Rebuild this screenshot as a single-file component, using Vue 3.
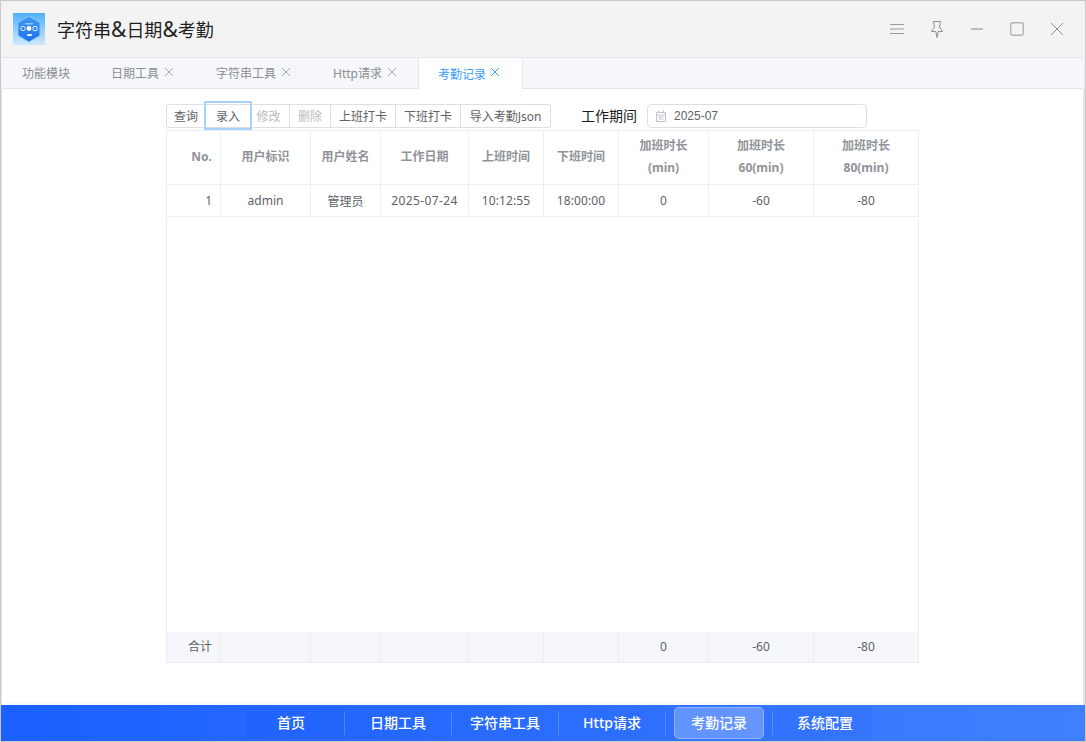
<template>
  <div class="window">
    <!-- Title bar -->
    <header class="titlebar">
      <svg class="logo" width="32" height="32" viewBox="0 0 32 32">
        <defs>
          <linearGradient id="logoBg" x1="0" y1="0" x2="0" y2="1">
            <stop offset="0" stop-color="#4fb0fb" />
            <stop offset="1" stop-color="#cfe9fe" />
          </linearGradient>
          <linearGradient id="logoHex" x1="0" y1="0" x2="0" y2="1">
            <stop offset="0" stop-color="#3f9bf6" />
            <stop offset="1" stop-color="#1f6fe8" />
          </linearGradient>
        </defs>
        <rect width="32" height="32" fill="url(#logoBg)" />
        <path d="M16 3 L27 9.5 V22.5 L16 29 L5 22.5 V9.5 Z" fill="url(#logoHex)" stroke="#8cc8fb" stroke-width="1" />
        <rect x="12" y="10" width="8" height="1.5" fill="#8cc8fb" />
        <circle cx="10" cy="15.5" r="2.2" fill="none" stroke="#d5ecff" stroke-width="1" />
        <circle cx="16" cy="15.5" r="2.4" fill="#fff" />
        <rect x="20" y="13.5" width="4" height="4.2" rx="1" fill="none" stroke="#e8f5ff" stroke-width="1" />
        <rect x="14" y="21" width="5" height="2" rx="1" fill="#e8f5ff" />
      </svg>
      <span class="app-title">字符串<span class="amp">&amp;</span>日期<span class="amp">&amp;</span>考勤</span>
      <div class="win-controls">
        <span class="win-btn">
          <svg width="14" height="10" viewBox="0 0 14 10" fill="none" stroke="#9a9a9a" stroke-width="1">
            <path d="M0 .5H14M0 5H14M0 9.5H14" />
          </svg>
        </span>
        <span class="win-btn">
          <svg width="12" height="17" viewBox="0 0 12 17" fill="none" stroke="#8f8f8f" stroke-width="1">
            <path d="M2.5 .5H9.5L8.5 6L11.5 10.5H7.2L6 16.5L4.8 10.5H.5L3.5 6Z" />
          </svg>
        </span>
        <span class="win-btn">
          <svg width="12" height="2" viewBox="0 0 12 2" fill="none" stroke="#bfbfbf" stroke-width="2">
            <path d="M0 1H12" />
          </svg>
        </span>
        <span class="win-btn">
          <svg width="14" height="14" viewBox="0 0 14 14" fill="none" stroke="#b5b5b5" stroke-width="1.4">
            <rect x=".7" y=".7" width="12.6" height="12.6" rx="2" />
          </svg>
        </span>
        <span class="win-btn">
          <svg width="12" height="12" viewBox="0 0 12 12" fill="none" stroke="#8f8f8f" stroke-width="1">
            <path d="M0 0L12 12M12 0L0 12" />
          </svg>
        </span>
      </div>
    </header>

    <!-- Tabs -->
    <nav class="tabs">
      <div v-for="tab in tabs" :key="tab.name" class="tab" :class="{ active: tab.active }">
        <span>{{ tab.name }}</span>
        <svg v-if="tab.closable" class="tab-close" width="8" height="8" viewBox="0 0 8 8" fill="none" stroke="currentColor" stroke-width="1">
          <path d="M0 0L8 8M8 0L0 8" />
        </svg>
      </div>
    </nav>

    <!-- Main content -->
    <main class="content">
      <div class="toolbar">
        <div class="btn-group">
          <button
            v-for="b in buttons"
            :key="b.label"
            class="btn"
            :class="{ disabled: b.disabled, focused: b.focused, tight: b.tight }"
            :style="{ width: b.width + 'px' }"
          >{{ b.label }}</button>
        </div>
        <label class="period-label">工作期间</label>
        <div class="date-input">
          <svg width="12" height="12" viewBox="0 0 12 12" fill="none" stroke="#c0c4cc" stroke-width="1">
            <path d="M1.5 2.5H10.5V11.5H1.5ZM1.5 5H10.5M3.5 .5V2.5M8.5 .5V2.5M3.5 7H8.5M3.5 9H8.5" />
          </svg>
          <span>2025-07</span>
        </div>
      </div>

      <table class="grid">
        <colgroup>
          <col v-for="(w, i) in colWidths" :key="i" :style="{ width: w + 'px' }" />
        </colgroup>
        <thead>
          <tr>
            <th class="num">No.</th>
            <th>用户标识</th>
            <th>用户姓名</th>
            <th>工作日期</th>
            <th>上班时间</th>
            <th>下班时间</th>
            <th>加班时长<br />(min)</th>
            <th>加班时长<br />60(min)</th>
            <th>加班时长<br />80(min)</th>
          </tr>
        </thead>
        <tbody>
          <tr v-for="row in rows" :key="row.no" class="data-row">
            <td class="num">{{ row.no }}</td>
            <td>{{ row.userId }}</td>
            <td>{{ row.userName }}</td>
            <td class="wide-date">{{ row.date }}</td>
            <td class="wide-time">{{ row.start }}</td>
            <td class="wide-time">{{ row.end }}</td>
            <td>{{ row.ot }}</td>
            <td>{{ row.ot60 }}</td>
            <td>{{ row.ot80 }}</td>
          </tr>
          <tr class="filler"><td colspan="9"></td></tr>
        </tbody>
        <tfoot>
          <tr>
            <td class="num">合计</td>
            <td></td>
            <td></td>
            <td></td>
            <td></td>
            <td></td>
            <td>0</td>
            <td>-60</td>
            <td>-80</td>
          </tr>
        </tfoot>
      </table>
    </main>

    <!-- Bottom dock -->
    <footer class="dock">
      <div class="dock-inner">
        <template v-for="(item, i) in dock" :key="item.name">
          <span v-if="i > 0" class="dock-sep"></span>
          <div class="dock-item" :class="{ active: item.active }" :style="{ width: item.width + 'px' }">{{ item.name }}</div>
        </template>
      </div>
    </footer>
  </div>
</template>

<script setup>
const tabs = [
  { name: '功能模块', closable: false },
  { name: '日期工具', closable: true },
  { name: '字符串工具', closable: true },
  { name: 'Http请求', closable: true },
  { name: '考勤记录', closable: true, active: true }
]

const buttons = [
  { label: '查询', width: 38 },
  { label: '录入', width: 45, focused: true },
  { label: '修改', width: 39, disabled: true, tight: true },
  { label: '删除', width: 41, disabled: true },
  { label: '上班打卡', width: 65 },
  { label: '下班打卡', width: 65 },
  { label: '导入考勤Json', width: 90 }
]

const colWidths = [54, 90, 70, 88, 75, 75, 90, 105, 105]

const rows = [
  {
    no: 1,
    userId: 'admin',
    userName: '管理员',
    date: '2025-07-24',
    start: '10:12:55',
    end: '18:00:00',
    ot: 0,
    ot60: -60,
    ot80: -80
  }
]

const dock = [
  { name: '首页', width: 98 },
  { name: '日期工具', width: 106 },
  { name: '字符串工具', width: 106 },
  { name: 'Http请求', width: 106 },
  { name: '考勤记录', width: 90, active: true },
  { name: '系统配置', width: 99 }
]
</script>

<style>
html, body {
  margin: 0;
  background: #fff;
}
</style>

<style scoped>
.window {
  width: 1086px;
  height: 742px;
  box-sizing: border-box;
  display: flex;
  flex-direction: column;
  border: 1px solid #c9c9c9;
  background: #f3f3f3;
  font-family: "Noto Sans", "Noto Sans CJK SC", sans-serif;
  font-size: 12px;
  color: #606266;
  overflow: hidden;
}

.titlebar {
  height: 56px;
  flex: none;
  display: flex;
  align-items: center;
  padding-left: 12px;
}

.logo {
  flex: none;
}

.app-title {
  margin-left: 12px;
  font-size: 18px;
  color: #1f1f1f;
}

.amp {
  font-size: 21px;
  line-height: 1;
}

.win-controls {
  margin-left: auto;
  margin-right: 8px;
  display: flex;
  align-items: center;
}

.win-btn {
  width: 40px;
  height: 40px;
  display: flex;
  align-items: center;
  justify-content: center;
}

.tabs {
  height: 32px;
  flex: none;
  box-sizing: border-box;
  margin-left: 1px;
  margin-right: 2px;
  display: flex;
  background: #f5f7fa;
  border: 1px solid #e4e7ed;
  border-left: none;
  border-right: none;
}

.tab {
  display: flex;
  align-items: center;
  gap: 6px;
  padding: 0 22px 0 21px;
  height: 30px;
  white-space: nowrap;
  color: #8b8e94;
}

.tab:first-child {
  padding: 0 20px;
}

.tab-close {
  margin-top: -3px;
  color: #a6a9ae;
}

.tab.active {
  background: #fff;
  color: #409eff;
  height: 31px;
  width: 105px;
  box-sizing: border-box;
  border-left: 1px solid #e4e7ed;
  border-right: 1px solid #e4e7ed;
  padding: 0 0 0 19px;
  gap: 5px;
}

.tab.active .tab-close {
  color: #409eff;
}

.content {
  flex: 1;
  background: #fff;
  border-left: 1px solid #e6e6e6;
  border-right: 2px solid #e6e6e6;
  padding: 15px 0 0 164px;
  min-height: 0;
}

.toolbar {
  display: flex;
  align-items: center;
  height: 24px;
  margin-bottom: 2px;
}

.btn-group {
  display: flex;
  height: 24px;
  box-sizing: border-box;
  border: 1px solid #dcdfe6;
  border-radius: 3px;
}

.btn {
  padding: 0 0 1px;
  margin: 0;
  height: 22px;
  background: #fff;
  border: none;
  border-left: 1px solid #dcdfe6;
  font: inherit;
  color: #606266;
  white-space: nowrap;
  text-align: center;
  position: relative;
}

.btn:first-child {
  border-left: none;
  border-radius: 3px 0 0 3px;
}

.btn:last-child {
  border-radius: 0 3px 3px 0;
}

.btn.disabled {
  color: #b8bbc1;
}

.btn.tight {
  padding-right: 3px;
}

.btn.focused {
  z-index: 1;
}

/* focus ring sits over the neighbouring buttons */
.btn.focused::after {
  content: "";
  position: absolute;
  left: -2px;
  right: -2px;
  top: -4px;
  bottom: -3px;
  border: 2px solid #a6d2fb;
  pointer-events: none;
}

.period-label {
  margin-left: 30px;
  padding-bottom: 2px;
  font-size: 14px;
  color: #1a1a1a;
  width: 56px;
  white-space: nowrap;
}

.date-input {
  margin-left: 10px;
  width: 220px;
  height: 24px;
  box-sizing: border-box;
  border: 1px solid #dcdfe6;
  border-radius: 4px;
  display: flex;
  align-items: center;
  gap: 7px;
  padding-left: 7px;
  color: #606266;
  font-family: "Liberation Sans", "Noto Sans CJK SC", sans-serif;
}

.grid {
  width: 752px;
  height: 533px;
  table-layout: fixed;
  border-collapse: collapse;
  border: 1px solid #ebeef5;
}

.grid th,
.grid td {
  border: 1px solid #ebeef5;
  padding: 0;
  text-align: center;
  font-weight: normal;
}

.grid th {
  height: 52px;
  font-weight: 700;
  line-height: 22px;
  padding-bottom: 1px;
  color: #909399;
}

.grid .num {
  text-align: right;
  padding-right: 8px;
}

.data-row td {
  height: 31px;
}

.grid .wide-date {
  letter-spacing: .4px;
}

.grid .wide-time {
  letter-spacing: .1px;
}

.grid .filler td {
  height: auto;
  border-bottom: none;
}

.grid tfoot td {
  height: 31px;
  padding-bottom: 1px;
  box-sizing: border-box;
  border-top: none;
  background: #f5f7fa;
}

.dock {
  height: 36px;
  flex: none;
  margin-top: auto;
  display: flex;
  justify-content: flex-start;
  padding-left: 245px;
  background: linear-gradient(90deg, #1a60ff, #4080ff);
  box-shadow: 0 -1px 4px rgba(0, 0, 0, .06);
}

.dock-inner {
  height: 32px;
  margin-top: 2px;
  display: flex;
  align-items: center;
  background: rgba(0, 40, 200, .05);
}

.dock-item {
  height: 32px;
  line-height: 32px;
  text-align: center;
  box-sizing: border-box;
  color: #fff;
  font-size: 14px;
  font-weight: 500;
}

.dock-item:first-child {
  padding-right: 8px;
}

.dock-item:last-child {
  padding-left: 5px;
}

.dock-item.active {
  width: 90px;
  background: rgba(255, 255, 255, .25);
  border: 1px solid rgba(255, 255, 255, .3);
  border-radius: 5px;
  line-height: 30px;
  margin: 0 8px;
}

.dock-sep {
  width: 1px;
  height: 24px;
  flex: none;
  background: rgba(255, 255, 255, .2);
}
</style>
